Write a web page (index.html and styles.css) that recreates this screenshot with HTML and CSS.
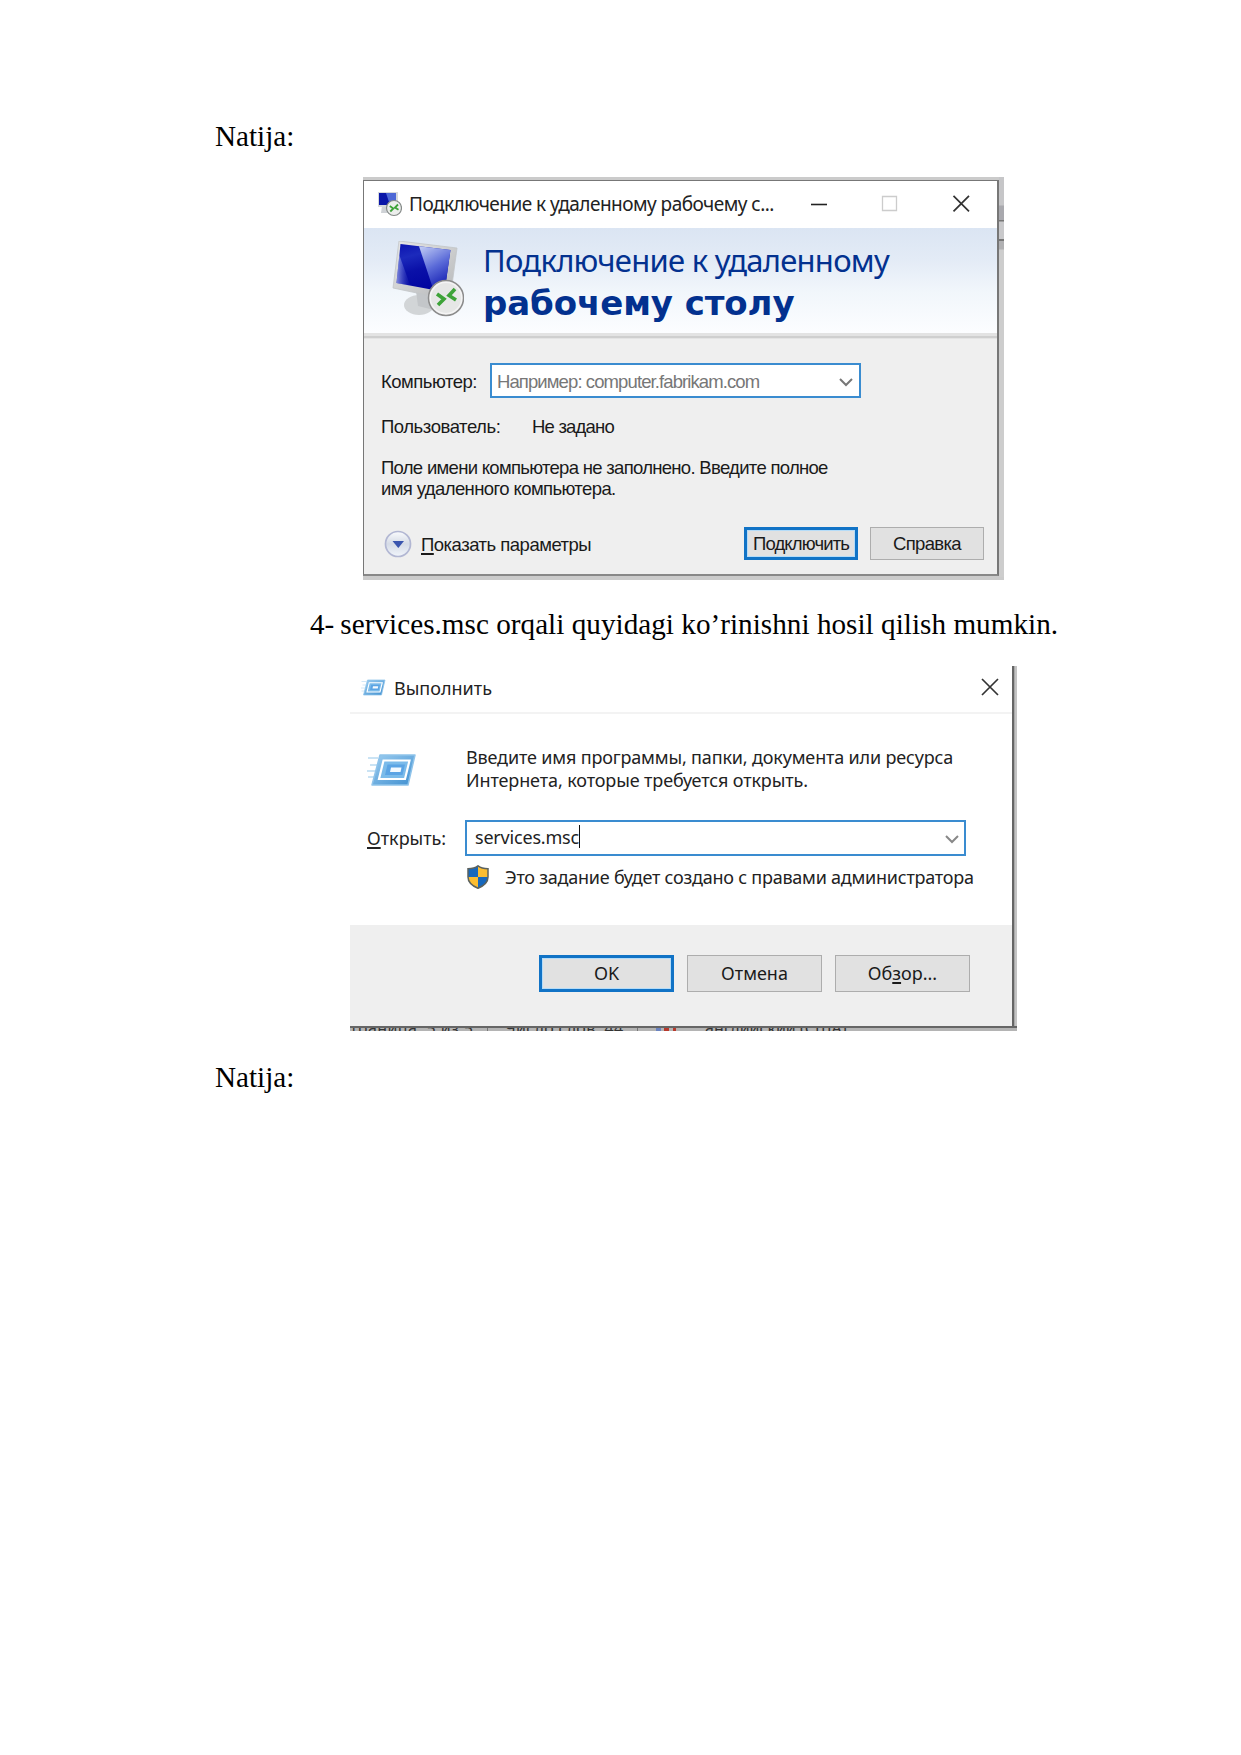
FILE: index.html
```html
<!DOCTYPE html>
<html lang="uz">
<head>
<meta charset="utf-8">
<title>Natija</title>
<link rel="stylesheet" href="styles.css">
</head>
<body>
<main class="page">
  <p class="para">Natija:</p>

  <figure class="shot rdp-shot">
    <section class="rdp">
      <header class="rdp-title">
        <svg class="rdp-small" viewBox="0 0 25 26">
          <path d="M5 15h9v7H4z" fill="#cfd2d6"/>
          <path d="M1 1h20v15H1z" fill="#d5d8dc"/>
          <path d="M2 2h17v12H2z" fill="#0a16a8"/>
          <path d="M9 2h10v12h-6z" fill="#4d68d6"/>
          <circle cx="17" cy="17" r="7.500" fill="#eceeec" stroke="#858a88" stroke-width="1.200"/>
          <path d="M12.800 15l3.500 2.500-3 3M21 13.500l-3 3 3.500 2.200" fill="none" stroke="#3da338" stroke-width="1.800"/>
        </svg>
        <span class="t rdp-caption">Подключение к удаленному рабочему с...</span>
        <svg class="controls" viewBox="0 0 160 18" fill="none">
          <path d="M0 9.500h16" stroke="#222" stroke-width="1.600"/>
          <path d="M71.500 1.500h14v14h-14z" stroke="#ccc" stroke-width="1.300"/>
          <path d="M142.500.8l15.500 15.500M158 .8l-15.500 15.500" stroke="#333" stroke-width="1.700"/>
        </svg>
      </header>
      <div class="banner">
        <svg class="rdp-big" viewBox="0 0 72 78">
          <defs>
            <linearGradient id="screen" x1="0" y1="0" x2=".3" y2="1"><stop offset="0" stop-color="#0a12b0"/><stop offset=".3" stop-color="#1c2abc"/><stop offset=".6" stop-color="#0a10a8"/><stop offset="1" stop-color="#0205a0"/></linearGradient>
            <linearGradient id="glare" x1="0" y1="0" x2=".4" y2="1"><stop offset="0" stop-color="#c4cff6"/><stop offset=".55" stop-color="#5a6ad8"/><stop offset="1" stop-color="#1822b4"/></linearGradient>
            <linearGradient id="glow" x1="0" y1="0" x2="1" y2="0"><stop offset="0" stop-color="#b4c0f6" stop-opacity=".7"/><stop offset="1" stop-color="#4a5ad0" stop-opacity="0"/></linearGradient>
            <linearGradient id="metal" x1="0" y1="0" x2="1" y2="1"><stop offset="0" stop-color="#e8e8e8"/><stop offset="1" stop-color="#b4b6b8"/></linearGradient>
          </defs>
          <ellipse cx="27" cy="64" rx="15" ry="10" fill="#d2d5d7"/>
          <path d="M24 50l18 5v14l-16-4z" fill="#c3c6c9"/>
          <path d="M7 0l58 7-7 52L1 47z" fill="url(#metal)" stroke="#c2c5c8" stroke-width=".8"/>
          <path d="M8.500 3l50 6-6 42L4.500 42z" fill="url(#screen)"/>
          <path d="M27 5.200L58.500 9l-6 42-11-2z" fill="url(#glare)"/>
          <path d="M7.300 14L4.500 42l14 3z" fill="url(#glow)"/>
          <circle cx="54" cy="57" r="17.500" fill="#f4f4f4" stroke="#8c8c8c" stroke-width="1.500"/>
          <circle cx="54" cy="57" r="15" fill="#e6e7e6"/>
          <path d="M45 53l7 5-6 6M63 48l-6 6.500 7 4.500" fill="none" stroke="#3da338" stroke-width="3.600"/>
        </svg>
        <div class="banner-text">
          <div class="banner-line">Подключение к удаленному</div>
          <div class="banner-bold">рабочему столу</div>
        </div>
      </div>
      <div class="rule"></div>
      <div class="rdp-body">
        <div class="row computer">
          <label class="t s-comp">Компьютер:</label>
          <div class="combo"><span class="t s-ph">Например: computer.fabrikam.com</span>
            <svg class="chev" viewBox="0 0 14 9"><path d="M1 1l6 6 6-6" fill="none" stroke="#777" stroke-width="2"/></svg></div>
        </div>
        <div class="row user"><span class="t s-user">Пользователь:</span><span class="t s-none">Не задано</span></div>
        <div class="note"><span class="t s-n1">Поле имени компьютера не заполнено. Введите полное</span><br><span class="t s-n2">имя удаленного компьютера.</span></div>
        <div class="row actions">
          <svg class="expander" viewBox="0 0 28 28"><defs><linearGradient id="disc" x1="0" y1="0" x2="0" y2="1"><stop offset="0" stop-color="#fafbfd"/><stop offset=".5" stop-color="#d5dbe6"/><stop offset="1" stop-color="#f1f5fb"/></linearGradient></defs><circle cx="14" cy="14" r="12.500" fill="url(#disc)" stroke="#b2b7d3" stroke-width="1.700"/><path d="M8.500 11h11.500l-5.700 7z" fill="#3a55ae"/></svg>
          <span class="t s-show"><u>П</u>оказать параметры</span>
          <button class="btn primary"><span class="t s-conn">Подключить</span></button>
          <button class="btn"><span class="t s-help">Справка</span></button>
        </div>
      </div>
    </section>
    <div class="behind"></div>
  </figure>

  <p class="para step"><span>4-</span><span>services.msc orqali quyidagi ko’rinishni hosil qilish mumkin.</span></p>

  <figure class="shot run-shot">
    <section class="run">
      <header class="run-title">
        <svg class="run-small" viewBox="0 0 50 34"><use href="#run-icon"/></svg>
        <span class="t s-run">Выполнить</span>
        <svg class="close" viewBox="0 0 18 18"><path d="M1 1l16 16M17 1L1 17" stroke="#333" stroke-width="1.700"/></svg>
      </header>
      <div class="run-body">
        <div class="row intro">
          <svg class="run-big" viewBox="0 0 50 34">
            <defs><linearGradient id="chip" x1="0" y1="0" x2="1" y2="1"><stop offset="0" stop-color="#9ccdf0"/><stop offset="1" stop-color="#3f8fd0"/></linearGradient></defs>
            <g id="run-icon" fill="none">
              <path d="M1 5h10M3 12h7M0 18h8M1 24h6" stroke="#b9daf1" stroke-width="1.300"/>
              <path d="M13 2h35l-7 30H5z" fill="url(#chip)" stroke="#8fc3ea" stroke-width="1.500" stroke-linejoin="round"/>
              <path d="M16.500 7.500h26l-4.500 18.500H12z" fill="#7bbbea" stroke="#fff" stroke-width="2.200"/>
              <path d="M20.500 11.500h17.500l-2.500 10.500h-17.500z" fill="#5ba4e4"/>
              <path d="M24 14.500h10.500l-1 4.500h-10.500z" fill="#f4faff"/>
            </g>
          </svg>
          <div class="intro-text"><span class="t s-i1">Введите имя программы, папки, документа или ресурса</span><br><span class="t s-i2">Интернета, которые требуется открыть.</span></div>
        </div>
        <div class="row open">
          <label class="t s-open"><u>О</u>ткрыть:</label>
          <div class="combo run-combo"><span class="t s-svc">services.msc</span><i class="caret"></i>
            <svg class="chev" viewBox="0 0 14 9"><path d="M1 1l6 6 6-6" fill="none" stroke="#888" stroke-width="2"/></svg></div>
        </div>
        <div class="row admin">
          <svg class="shield" viewBox="0 0 22 24"><path d="M11 1C8 3.200 4 3.700 1 3.700V12h10zM11 12h10c0 5.500-4.500 9-10 11.300z" fill="#1768bd"/><path d="M11 1c3 2.200 7 2.700 10 2.700V12H11zM1 12h10v11.300C5.500 21 1 17.500 1 12z" fill="#fcbd30"/><path d="M11 .8C8 3.200 4 3.700 1 3.700V12c0 5.500 4.500 9 10 11.300C16.500 21 21 17.500 21 12V3.700C18 3.700 14 3.200 11 .8z" fill="none" stroke="#5c625e" stroke-width="1.500"/></svg>
          <span class="t s-adm">Это задание будет создано с правами администратора</span>
        </div>
      </div>
      <footer class="run-foot">
        <button class="btn primary"><span class="t">OK</span></button>
        <button class="btn"><span class="t">Отмена</span></button>
        <button class="btn"><span class="t s-browse">Об<u>з</u>ор...</span></button>
      </footer>
    </section>
    <div class="run-edge"></div>
    <div class="status"><span class="st1">траница: 5 из 5</span><span class="st2">Число слов: 44</span><span class="flag"></span><span class="st3">английский (США)</span></div>
  </figure>

  <p class="para last">Natija:</p>
</main>
</body>
</html>
```
FILE: styles.css
```css
* { box-sizing: border-box; }
body { margin: 0; background: #fff; color: #000; }
.page { width: 1241px; height: 1755px; padding: 119px 0 0 215px; overflow: hidden; }
.para { margin: 0; height: 34px; font: 29.17px/34px "Liberation Serif", serif; white-space: nowrap; }
.t { white-space: nowrap; }
.shot { margin: 0; display: grid; }
.row { display: flex; }
svg { display: block; flex: none; }
u { text-decoration-thickness: 1.500px; text-underline-offset: 2px; }

/* Remote desktop window */
.rdp-shot { width: 641px; height: 403px; margin: 24px 0 0 148px; padding-top: 3px; grid-template-columns: 636px 5px; background: #cbcbcb; }
.rdp { height: 396px; border: 1.500px solid #777; border-right: 2px solid #777; border-bottom: 2px solid #888; background: #efefef; font-family: "Liberation Sans", sans-serif; font-size: 18.500px; line-height: 24px; color: #1a1a1a; }
.behind { height: 400px; margin-top: -3px; background: linear-gradient(#c6c6c8 0 28px, #a9a9ae 29px 43px, #777 43px 44px, #c9c9cb 45px 62px, #777 62px 64px, #b0b0b2 64px 72px, #cdcdcd 73px); }
.rdp-title { display: flex; height: 47px; padding: 11px 0 0 13px; background: #fff; font: 19px/24px "Noto Sans", sans-serif; color: #222; }
.rdp-small { width: 25px; height: 26px; margin-top: -1px; }
.rdp-caption { margin-left: 7px; letter-spacing: -.52px; }
.controls { width: 160px; height: 18px; margin: 3px 26px 0 auto; }
.banner { display: flex; height: 105px; padding: 13px 0 0 28px; background: linear-gradient(#dbe5f3, #e3ebf6 30%, #f1f6fb 60%, #fcfdff); color: #03318f; font-family: "Noto Sans", sans-serif; white-space: nowrap; }
.rdp-big { width: 72px; height: 78px; }
.banner-text { margin: -3px 0 0 19px; }
.banner-text div { height: 43px; line-height: 44px; }
.banner-line { font-size: 31px; letter-spacing: -.74px; }
.banner-bold { font-family: "DejaVu Sans", sans-serif; font-size: 34px; font-weight: 700; letter-spacing: -.1px; }
.rule { height: 6px; background: linear-gradient(#e3e3e3 0 3px, #cfcfcf 3px 5px, #e4e4e4 5px); }
.rdp-body { padding: 24px 13px 0 17px; }
.combo { display: flex; background: #fff; border: 2px solid #3a8cd0; }
.computer { height: 34px; }
.computer label { width: 109px; padding-top: 7px; letter-spacing: -.5px; }
.computer .combo { width: 371px; height: 35px; padding: 5px 6px 0 5px; color: #777; }
.s-ph { letter-spacing: -.9px; }
.chev { width: 14px; height: 9px; margin: 8px 0 0 auto; }
.user { margin-top: 18px; }
.s-user { width: 151px; letter-spacing: -.45px; }
.s-none { letter-spacing: -.8px; }
.note { margin-top: 18px; line-height: 21px; height: 44px; }
.s-n1 { letter-spacing: -.7px; }
.s-n2 { letter-spacing: -.6px; }
.actions { margin-top: 26px; height: 34px; }
.expander { width: 28px; height: 28px; margin: 3px 9px 0 3px; }
.s-show { margin-top: 6px; letter-spacing: -.5px; }
.s-conn { letter-spacing: -.85px; }
.s-help { letter-spacing: -.65px; }
.btn { padding: 0; width: 114px; height: 33px; border: 1.500px solid #adadad; background: #e1e1e1; color: #1a1a1a; font: inherit; text-align: center; }
.btn.primary { border: 3px solid #1173c6; box-shadow: inset 0 0 0 1px #b5dcf8; }
.actions .btn { margin-left: 12px; }
.actions .primary { margin-left: auto; }

.step { margin-top: 27px; padding-left: 95px; display: flex; gap: 6px; letter-spacing: .03px; }

/* Run window */
.run-shot { width: 667px; height: 365px; margin: 25px 0 0 135px; grid-template: 360px 5px / 662px 5px; }
.run { font: 18px/24px "Noto Sans", sans-serif; color: #222; background: #fff; }
.run-edge { background: linear-gradient(90deg, #666 0 2px, #aaa 2px 3px, #c4c4c4 3px); }
.run-title { display: flex; height: 48px; padding: 10px 13px 0 11px; border-bottom: 2px solid #f3f3f3; }
.run-small { width: 25px; height: 17px; margin-top: 3px; }
.s-run { margin-left: 8px; }
.close { width: 18px; height: 18px; margin: 2px 0 0 auto; }
.run-body { height: 211px; padding: 36px 0 0 17px; }
.run-big { width: 50px; height: 34px; margin: 3px 49px 0 0; }
.intro-text { line-height: 23px; height: 46px; margin-top: -4px; }
.intro { height: 46px; }
.s-i1 { letter-spacing: -.16px; }
.s-i2 { letter-spacing: -.11px; }
.open { margin-top: 24px; }
.open label { width: 98px; padding-top: 6px; }
.run-combo { width: 501px; height: 36px; padding: 3px 5px 0 8px; }
.s-svc { letter-spacing: -.2px; }
.caret { width: 1.500px; height: 23px; background: #111; }
.run-combo .chev { margin-top: 10px; }
.admin { margin-top: 9px; }
.shield { width: 22px; height: 24px; margin: 0 16px 0 100px; }
.s-adm { letter-spacing: -.24px; }
.run-foot { display: flex; gap: 13px; height: 101px; padding: 30px 0 0 189px; background: #efefef; }
.run-foot .btn { width: 135px; height: 37px; padding-bottom: 2px; }
.status { grid-column: 1 / -1; height: 5px; border-top: 2px solid #666; background: #b4b4b4; overflow: hidden; display: flex; font: 16px/16px "Noto Sans", sans-serif; color: #333; white-space: nowrap; }
.status span { margin-top: -8px; }
.st1 { width: 155px; letter-spacing: .4px; background: linear-gradient(90deg, transparent 137px, #777 137px 138px, transparent 138px); }
.st2 { width: 150px; letter-spacing: .3px; background: linear-gradient(90deg, transparent 132px, #777 132px 133px, transparent 133px); }
.status .flag { width: 50px; height: 3px; margin-top: 0; background: linear-gradient(90deg, transparent 1px, #6a83c0 1px 6px, transparent 6px 9px, #b8392c 9px 14px, transparent 14px 18px, #b8392c 18px 21px, transparent 21px); }
.last { margin-top: 29px; }
```
